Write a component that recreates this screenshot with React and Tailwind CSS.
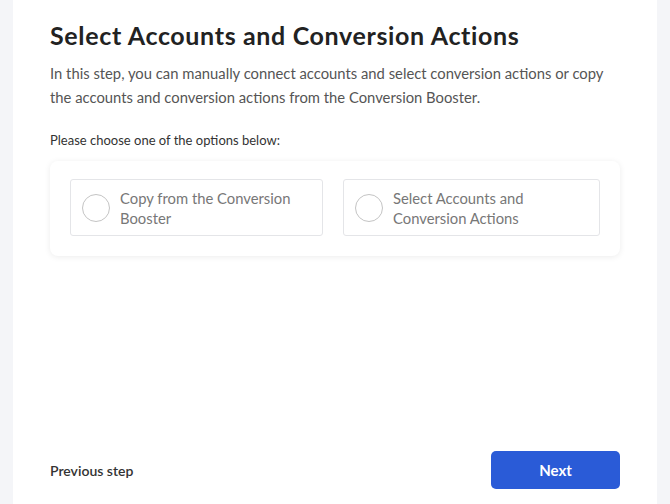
import React, { useState } from 'react';

const options = [
  { id: 'copy', label: 'Copy from the Conversion Booster' },
  { id: 'select', label: 'Select Accounts and Conversion Actions' },
];

const App = () => {
  const [choice, setChoice] = useState(null);

  return (
    <div className="h-[504px] w-full bg-[#f4f5f8] font-['Lato','Liberation_Sans',sans-serif]">
      <div className="mx-[13px] flex h-full flex-col bg-white px-[37px]">
        <h1 className="pt-[19px] text-[25px] font-bold leading-[32px] tracking-[0.65px] text-[#222]">
          Select Accounts and Conversion Actions
        </h1>
        <p className="mt-[10px] w-[570px] text-[14.8px] leading-[24px] text-[#555]">
          In this step, you can manually connect accounts and select conversion actions or copy
          the accounts and conversion actions from the Conversion Booster.
        </p>
        <p className="mt-[21px] text-[13px] leading-[20px] text-[#333]">
          Please choose one of the options below:
        </p>

        {/* option cards */}
        <div className="mt-[11px] grid w-[570px] grid-cols-[253px_257px] gap-5 rounded-lg bg-white px-5 pt-[18px] pb-[20px] shadow-[0_1px_6px_rgba(0,0,0,0.08)]">
          {options.map((opt) => (
            <button
              key={opt.id}
              onClick={() => setChoice(opt.id)}
              className="flex h-[57px] items-center rounded-[3px] border border-[#e4e5e8] bg-white pl-[11px] pr-4 text-left"
            >
              <span className={`mr-[10px] h-[28px] w-[28px] shrink-0 rounded-full border ${choice === opt.id ? 'border-[6px] border-[#2a5bd7]' : 'border-[#c4c4c4]'}`} />
              <span className="text-[14.8px] leading-[20px] text-[#777]">{opt.label}</span>
            </button>
          ))}
        </div>

        <div className="mt-auto mb-[15px] flex items-center justify-between">
          <button className="text-[14px] font-semibold text-[#333]">Previous step</button>
          <button className="h-[38px] w-[129px] rounded-[5px] bg-[#2a5bd7] text-[15px] font-bold text-white">
            Next
          </button>
        </div>
      </div>
    </div>
  );
};

export default App;
